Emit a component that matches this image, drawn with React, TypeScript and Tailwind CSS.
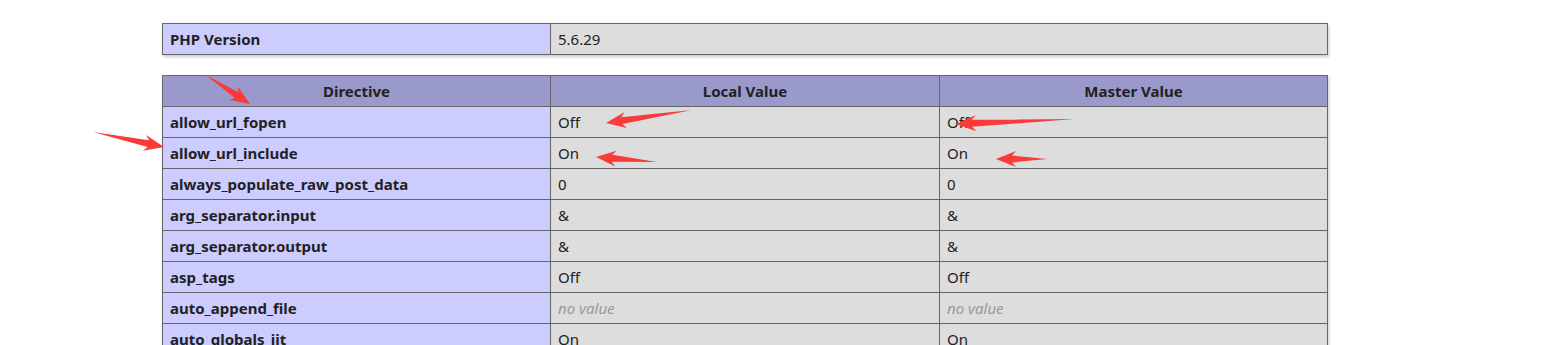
type Row = { name: string; local: string; master: string };

const ROWS: Row[] = [
  { name: 'allow_url_fopen', local: 'Off', master: 'Off' },
  { name: 'allow_url_include', local: 'On', master: 'On' },
  { name: 'always_populate_raw_post_data', local: '0', master: '0' },
  { name: 'arg_separator.input', local: '&', master: '&' },
  { name: 'arg_separator.output', local: '&', master: '&' },
  { name: 'asp_tags', local: 'Off', master: 'Off' },
  { name: 'auto_append_file', local: 'no value', master: 'no value' },
  { name: 'auto_globals_jit', local: 'On', master: 'On' },
];

// annotation arrows: tail -> tip
const ARROWS = [
  { x1: 206, y1: 75, x2: 250, y2: 104 },
  { x1: 692, y1: 110, x2: 606, y2: 123 },
  { x1: 1075, y1: 119, x2: 956, y2: 124 },
  { x1: 93, y1: 132, x2: 164, y2: 147 },
  { x1: 657, y1: 162, x2: 596, y2: 157 },
  { x1: 1047, y1: 159, x2: 996, y2: 159 },
];

function arrowPoints(a: { x1: number; y1: number; x2: number; y2: number }) {
  const dx = a.x2 - a.x1;
  const dy = a.y2 - a.y1;
  const len = Math.hypot(dx, dy);
  const ux = dx / len;
  const uy = dy / len;
  const nx = -uy;
  const ny = ux;
  const head = Math.min(20, len * 0.4);
  const bx = a.x2 - ux * head;
  const by = a.y2 - uy * head;
  const hw = 8;
  const sw = 3.5;
  const pts = [
    [a.x1, a.y1],
    [bx + nx * sw + ux * 4, by + ny * sw + uy * 4],
    [bx + nx * hw, by + ny * hw],
    [a.x2, a.y2],
    [bx - nx * hw, by - ny * hw],
    [bx - nx * sw + ux * 4, by - ny * sw + uy * 4],
  ];
  return pts.map((p) => p.join(',')).join(' ');
}

function Value({ v }: { v: string }) {
  if (v === 'no value') return <i className="text-[#999]">no value</i>;
  return <>{v}</>;
}

export default function App() {
  return (
    <div className="relative min-h-[345px] bg-white text-[#222] font-['Noto_Sans',sans-serif] text-[15px] overflow-hidden">
      <div className="pt-[23px] pl-[162px]">
        <table className="border-collapse w-[1166px] shadow-[1px_2px_3px_#ccc]">
          <tbody>
            <tr className="h-[31px]">
              <td className="border border-[#666] bg-[#ccf] font-bold px-[7px] py-0 w-[388px] align-middle">PHP Version</td>
              <td className="border border-[#666] bg-[#ddd] px-[7px] py-0 align-middle">5.6.29</td>
            </tr>
          </tbody>
        </table>

        <table className="mt-[20px] border-collapse w-[1166px] shadow-[1px_2px_3px_#ccc]">
          <thead>
            <tr className="h-[31px] bg-[#99c]">
              <th className="border border-[#666] font-bold px-[7px] py-0 w-[388px] text-center align-middle">Directive</th>
              <th className="border border-[#666] font-bold px-[7px] py-0 w-[389px] text-center align-middle">Local Value</th>
              <th className="border border-[#666] font-bold px-[7px] py-0 text-center align-middle">Master Value</th>
            </tr>
          </thead>
          <tbody>
            {ROWS.map((r) => (
              <tr key={r.name} className="h-[31px]">
                <td className="border border-[#666] bg-[#ccf] font-bold px-[7px] py-0 align-middle">{r.name}</td>
                <td className="border border-[#666] bg-[#ddd] px-[7px] py-0 align-middle"><Value v={r.local} /></td>
                <td className="border border-[#666] bg-[#ddd] px-[7px] py-0 align-middle"><Value v={r.master} /></td>
              </tr>
            ))}
          </tbody>
        </table>
      </div>

      <svg className="absolute inset-0 pointer-events-none" width="1567" height="345">
        {ARROWS.map((a, i) => (
          <polygon key={i} points={arrowPoints(a)} fill="#fb3a3a" />
        ))}
      </svg>
    </div>
  );
}
